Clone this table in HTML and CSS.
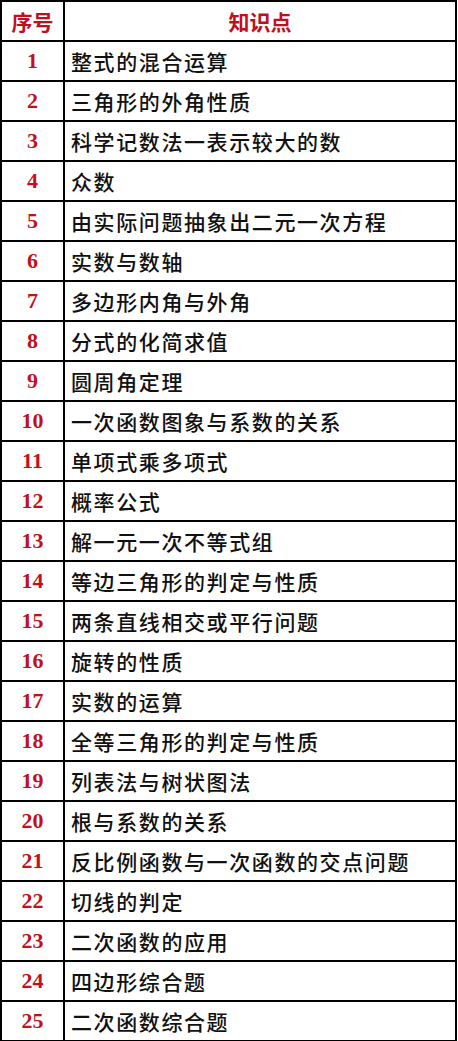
FILE: index.html
```html
<!DOCTYPE html>
<html lang="zh">
<head>
<meta charset="utf-8">
<link rel="stylesheet" href="styles.css">
</head>
<body>
<table class="kp">
<colgroup><col class="c-no"><col class="c-name"></colgroup>
<thead>
<tr><th class="no">序号</th><th class="name-h">知识点</th></tr>
</thead>
<tbody>
<tr><td class="no">1</td><td class="name">整式的混合运算</td></tr>
<tr><td class="no">2</td><td class="name">三角形的外角性质</td></tr>
<tr><td class="no">3</td><td class="name">科学记数法一表示较大的数</td></tr>
<tr><td class="no">4</td><td class="name">众数</td></tr>
<tr><td class="no">5</td><td class="name">由实际问题抽象出二元一次方程</td></tr>
<tr><td class="no">6</td><td class="name">实数与数轴</td></tr>
<tr><td class="no">7</td><td class="name">多边形内角与外角</td></tr>
<tr><td class="no">8</td><td class="name">分式的化简求值</td></tr>
<tr><td class="no">9</td><td class="name">圆周角定理</td></tr>
<tr><td class="no">10</td><td class="name">一次函数图象与系数的关系</td></tr>
<tr><td class="no">11</td><td class="name">单项式乘多项式</td></tr>
<tr><td class="no">12</td><td class="name">概率公式</td></tr>
<tr><td class="no">13</td><td class="name">解一元一次不等式组</td></tr>
<tr><td class="no">14</td><td class="name">等边三角形的判定与性质</td></tr>
<tr><td class="no">15</td><td class="name">两条直线相交或平行问题</td></tr>
<tr><td class="no">16</td><td class="name">旋转的性质</td></tr>
<tr><td class="no">17</td><td class="name">实数的运算</td></tr>
<tr><td class="no">18</td><td class="name">全等三角形的判定与性质</td></tr>
<tr><td class="no">19</td><td class="name">列表法与树状图法</td></tr>
<tr><td class="no">20</td><td class="name">根与系数的关系</td></tr>
<tr><td class="no">21</td><td class="name">反比例函数与一次函数的交点问题</td></tr>
<tr><td class="no">22</td><td class="name">切线的判定</td></tr>
<tr><td class="no">23</td><td class="name">二次函数的应用</td></tr>
<tr><td class="no">24</td><td class="name">四边形综合题</td></tr>
<tr><td class="no">25</td><td class="name">二次函数综合题</td></tr>
</tbody>
</table>
</body>
</html>
```

FILE: styles.css
```css
html, body {
  margin: 0;
  padding: 0;
  background: #fff;
}
.kp {
  border-collapse: collapse;
  width: 457px;
  table-layout: fixed;
  font-family: "Noto Sans CJK SC", "Noto Sans", sans-serif;
}
.c-no { width: 63px; }
.kp th, .kp td {
  border: 2px solid #000;
  height: 38px;
  padding: 0;
  box-sizing: content-box;
}
.kp .no {
  text-align: center;
  color: #c3111c;
  font-family: "Liberation Serif", "Noto Sans CJK SC", serif;
  font-weight: 700;
  font-size: 22px;
}
.kp th.no {
  font-family: "Noto Sans CJK SC", sans-serif;
  font-size: 21px;
  font-weight: 700;
  color: #c0101c;
}
.kp .name-h {
  text-align: center;
  color: #c0101c;
  font-size: 21px;
  font-weight: 700;
}
.kp .name {
  text-align: left;
  padding-left: 6px;
  color: #111;
  font-size: 21px;
  font-weight: 500;
  letter-spacing: 1.6px;
  white-space: nowrap;
}
```
